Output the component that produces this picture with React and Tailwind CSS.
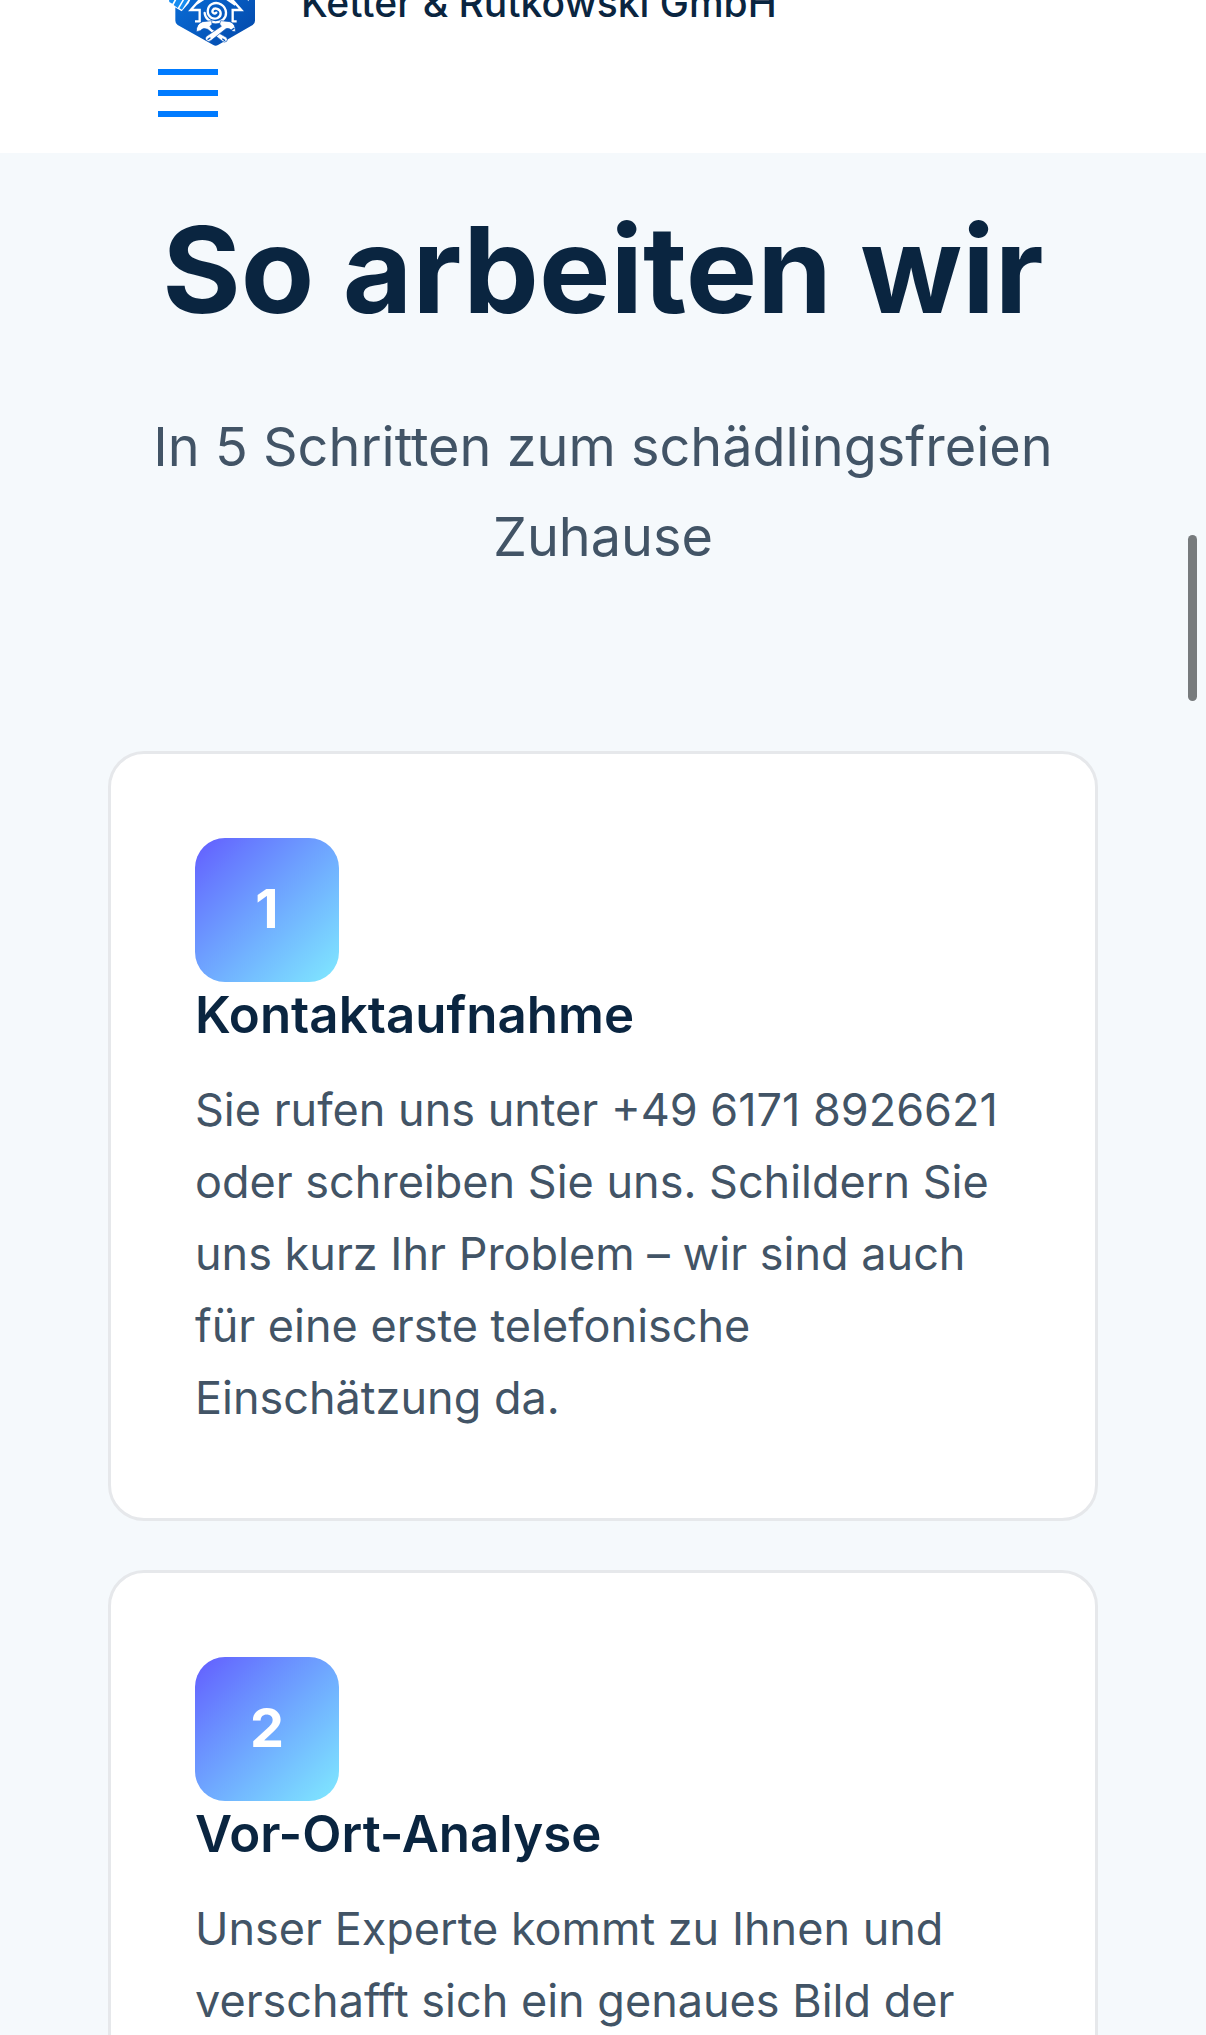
import React from 'react';

const steps = [
  {
    title: 'Kontaktaufnahme',
    text: 'Sie rufen uns unter +49 6171 8926621 oder schreiben Sie uns. Schildern Sie uns kurz Ihr Problem – wir sind auch für eine erste telefonische Einschätzung da.',
  },
  {
    title: 'Vor-Ort-Analyse',
    text: 'Unser Experte kommt zu Ihnen und verschafft sich ein genaues Bild der',
  },
];

const Logo = () => (
  <svg viewBox="-6 -93 300 228" className="h-[76px] w-[100px] shrink-0 overflow-visible" aria-hidden="true">
    <defs>
      <linearGradient id="logoBlue" x1="0" y1="0" x2="1" y2="1">
        <stop offset="0" stopColor="#0a74e0" />
        <stop offset="1" stopColor="#0347a8" />
      </linearGradient>
    </defs>
    {/* shield */}
    <path d="M46 -60 165 -90 285 -60V62Q285 70 278 75L174 135Q167 139 160 135L53 75Q46 70 46 62Z" fill="url(#logoBlue)" />
    {/* spray can corner */}
    <path d="M26 -8 98 -16 86 10 65 34 28 12Z" fill="#fff" />
    <path d="M26 -8H48L37 11 28 6ZM53 -8H72L53 24L41 15ZM77 -8H90L66 29L58 25Z" fill="#168cf0" />
    <g fill="none" stroke="#fff">
      {/* house */}
      <path d="M126 -8 92 30H119V64H105M108 12 166 -26 226 14M210 -8 244 30H218V64H230" strokeWidth="7" />
      {/* spiral */}
      <path
        d="M169 38C163 44 155 38 158 31C163 21 181 26 182 39C183 53 166 60 154 53C138 43 141 20 156 12C174 3 197 16 198 38C199 56 184 67 167 67C150 67 135 55 134 39"
        strokeWidth="7"
        strokeLinecap="round"
      />
    </g>
    {/* crossed hammers */}
    <g stroke="#0755b9" strokeWidth="2" fill="#fff">
      <path d="M109 95Q108 72 128 65L155 62 156 73 150 79 155 87 199 112Q205 118 200 124Q192 129 186 123L143 88Q129 81 121 92Z" />
      <path d="M226 95Q228 72 210 65L182 62 179 72 184 79 139 109Q133 115 138 121Q147 128 154 121L198 86Q207 82 218 94Z" />
    </g>
    <path d="M188 117 194 121M144 118 150 114M215 90 222 85" stroke="#0755b9" strokeWidth="4" strokeLinecap="round" />
    <path d="M257 -6H266V4Z" fill="#fff" />
  </svg>
);

const Header = () => (
  <header className="flex h-[153px] shrink-0 flex-col justify-end overflow-hidden bg-white px-[158px] pb-9">
    <a href="#" className="flex items-center gap-[43px] text-[39px] leading-[68px] font-medium text-[#0a2540]">
      <Logo />
      <span className="mb-2 whitespace-nowrap">Ketter &amp; Rutkowski GmbH</span>
    </a>
    <button type="button" aria-label="Menü" className="mt-6 flex w-[60px] flex-col gap-[15px]">
      <span className="h-1.5 w-full bg-[#007bff]" />
      <span className="h-1.5 w-full bg-[#007bff]" />
      <span className="h-1.5 w-full bg-[#007bff]" />
    </button>
  </header>
);

const StepCard = ({ number, title, text }) => (
  <li className="rounded-[36px] border-3 border-[#e6e8eb] bg-white p-[84px]">
    <div className="flex size-36 items-center justify-center rounded-[30px] bg-linear-135 from-[#635bff] to-[#80e9ff] pb-1 text-[54px] font-bold text-white">
      {number}
    </div>
    <h3 className="mb-[26px] text-[51px] leading-[66px] font-semibold text-[#0a2540]">{title}</h3>
    <p className="text-[45px] leading-[72px] text-[#425466]">{text}</p>
  </li>
);

const App = () => (
  <div className="relative flex h-screen flex-col overflow-hidden bg-[#f5f9fc] font-['Inter',sans-serif]">
    <Header />
    <main className="px-[108px] pt-[45px]">
      <div className="mb-[169px] text-center">
        <h2 className="mb-[60px] text-[120px] leading-[144px] font-bold text-[#0a2540]">So arbeiten wir</h2>
        <p className="text-[54px] leading-[90px] text-[#425466]">In 5 Schritten zum schädlingsfreien Zuhause</p>
      </div>
      <ol className="flex flex-col gap-[49px]">
        {steps.map((step, index) => (
          <StepCard key={step.title} number={index + 1} title={step.title} text={step.text} />
        ))}
      </ol>
    </main>
    {/* scroll indicator */}
    <div className="absolute top-[535px] right-[9px] h-[166px] w-[9px] rounded-full bg-[#777b7d]" />
  </div>
);

export default App;
